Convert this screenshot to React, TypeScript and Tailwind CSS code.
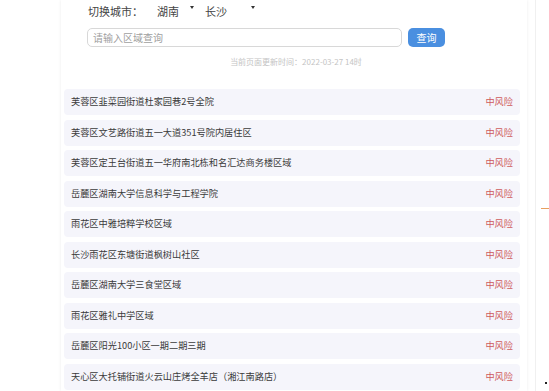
import React from "react";

const rows = [
  "芙蓉区韭菜园街道杜家园巷2号全院",
  "芙蓉区文艺路街道五一大道351号院内居住区",
  "芙蓉区定王台街道五一华府南北栋和名汇达商务楼区域",
  "岳麓区湖南大学信息科学与工程学院",
  "雨花区中雅培粹学校区域",
  "长沙雨花区东塘街道枫树山社区",
  "岳麓区湖南大学三食堂区域",
  "雨花区雅礼中学区域",
  "岳麓区阳光100小区一期二期三期",
  "天心区大托铺街道火云山庄烤全羊店（湘江南路店）",
];

const Caret = () => (
  <span className="inline-block w-0 h-0 border-l-[2.5px] border-r-[2.5px] border-t-[3px] border-l-transparent border-r-transparent border-t-[#333] self-start mt-[6px]" />
);

export default function App() {
  return (
    <div
      className="relative w-[549px] h-[391px] overflow-hidden bg-white flex"
      style={{ fontFamily: '"Noto Sans CJK SC", "Noto Sans", sans-serif' }}
    >
      <div className="w-[61px] shrink-0" />
      <div className="w-[466px] shrink-0 flex flex-col shadow-[0_0_3px_rgba(0,0,0,0.08)] bg-white">
        <div className="flex items-center h-[22px] pl-[27px] text-[11px] text-[#444]">
          <span>切换城市：</span>
          <span className="ml-[14px]">湖南</span>
          <span className="ml-[11px] flex h-full"><Caret /></span>
          <span className="ml-[11px]">长沙</span>
          <span className="ml-[24px] flex h-full"><Caret /></span>
        </div>
        <div className="flex items-center mt-[6px] pl-[26px] gap-[6px]">
          <div className="w-[315px] h-[19px] border border-[#d8d8d8] rounded-[5px] flex items-center pl-[5px] text-[10px] text-[#a0a0a0]">
            请输入区域查询
          </div>
          <div className="w-[37px] h-[19px] rounded-[5px] bg-[#4a8fe0] text-white text-[10px] flex items-center justify-center">
            查询
          </div>
        </div>
        <div className="text-center text-[8px] text-[#c4c4c4] mt-[9px] pl-[4px]">
          当前页面更新时间：2022-03-27 14时
        </div>
        <div className="flex flex-col gap-[4.5px] pl-[3px] pr-[7px] mt-[21px]">
          {rows.map((r) => (
            <div
              key={r}
              className="h-[26px] rounded-[4px] bg-[#f5f5fb] flex items-center justify-between pl-[7px] pr-[7px] text-[9.2px]"
            >
              <span className="text-[#3a3a3a]">{r}</span>
              <span className="text-[#cf5b5b]">中风险</span>
            </div>
          ))}
        </div>
      </div>
      <div className="flex-1 relative">
        <div className="absolute left-[8px] top-0 bottom-0 w-px bg-[#f0f0f0]" />
        <div className="absolute left-[14px] top-[208px] w-[8px] h-[1px] bg-[#e8a060]" />
        <div className="absolute left-[18px] top-[382px] w-[2px] h-[2px] bg-[#222]" />
      </div>
    </div>
  );
}
